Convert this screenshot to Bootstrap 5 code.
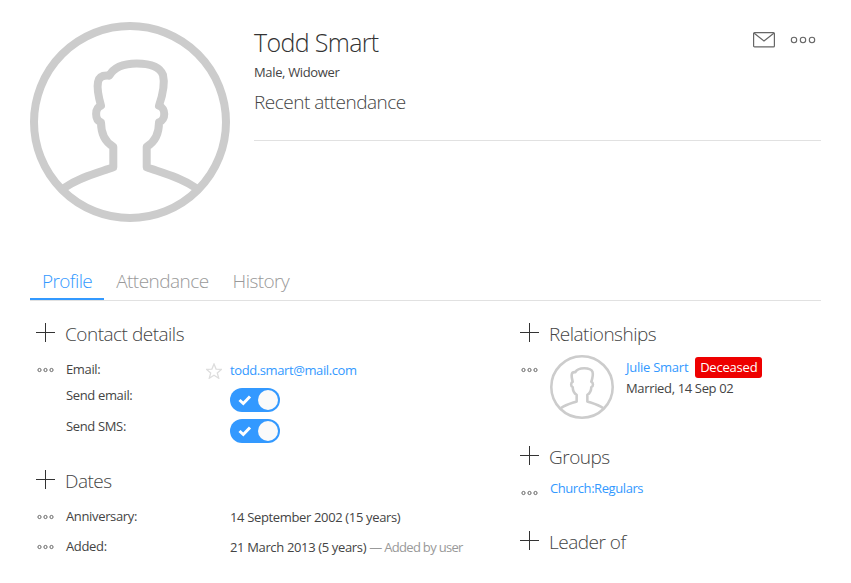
<!DOCTYPE html>
<html lang="en">
<head>
<meta charset="utf-8">
<meta name="viewport" content="width=device-width, initial-scale=1">
<title>Todd Smart</title>
<link href="https://cdn.jsdelivr.net/npm/bootstrap@5.3.0/dist/css/bootstrap.min.css" rel="stylesheet">
<style>
body{font-family:"Segoe UI","Open Sans","Noto Sans",sans-serif;font-size:13px;line-height:14px;color:#444;background:#fff;overflow:hidden;letter-spacing:-.35px}
a{color:#39f;text-decoration:none}
.page{padding:22px 30px 0}
.avatar-lg{width:200px;height:200px}
.avatar-sm{width:64px;height:64px}
.avatar{display:block;fill:none;stroke:#ccc;stroke-width:8;stroke-linejoin:round}
.intro{padding:3px 0 23px;border-bottom:1px solid #e1e1e1;margin-left:24px}
.person-name{font-size:25px;line-height:34px;font-weight:300;margin:0 0 3px;color:#333;letter-spacing:-.65px}
.facts{line-height:20px;margin-bottom:5px}
.title{font-size:19px;line-height:30px;font-weight:300;margin:0;color:#444;letter-spacing:-.5px}
.tools{gap:15px;padding-top:7px;margin-right:5px}
.stroke-icon{fill:none;stroke:#666;display:block}
.tabs{margin-top:44px;border-bottom:1px solid #e1e1e1}
.tabs .nav-link{font-size:19px;line-height:30px;font-weight:300;letter-spacing:-.55px;padding:0 12px 2px;border-bottom:2px solid transparent;color:#999}
.tabs .nav-link.active{color:#39f;border-color:#39f;letter-spacing:-.6px}
.main-col{width:484px;padding-left:6px}
.side-col{padding-left:6px}
.sections{padding-top:18px}
.head{gap:10px;height:28px}
.head svg{margin-top:4px}
.head .stroke-icon{stroke:#333}
.head + .entry{margin-top:14px}
.entry{min-height:30px}
.entry.entry-mail{min-height:27px}
.more{width:30px;padding:6px 0 0 1px}
.term{width:140px;padding-top:1px}
.fav{width:24px;padding-top:2px}
.val{padding-top:2px;white-space:nowrap}
.mail{letter-spacing:-.4px}
.note{color:#999;letter-spacing:-.68px}
.switch-row{min-height:31px;padding-left:30px}
.switch-row .term{width:164px;padding-top:0}
.switch{width:50px;height:24px;border-radius:12px;background:#39f;padding:2px 2px 2px 8px}
.knob{width:20px;height:20px;border-radius:50%;background:#fafafa}
.deceased{background:#e00;color:#fff;border-radius:3px;line-height:21px;height:21px;width:67px;text-align:center;margin-left:7px;letter-spacing:-.2px}
.kin{padding:2px 0 0 12px}
.kin-line{line-height:21px;height:21px}
.kin-line a{letter-spacing:-.25px}
.relation .more{padding-top:12px}
.relations{height:123px}
.groups{height:85px}
.group-row{padding-top:11px}
.group-row .more{padding-top:9px}
.group-row a{letter-spacing:-.42px}
</style>
</head>
<body>
<svg width="0" height="0" class="position-absolute" aria-hidden="true">
<defs>
<symbol id="person" viewBox="0 0 200 200"><circle cx="100" cy="100" r="96"/><path d="M34 166C50 155 67 151 83.300 145.300V124.700C75 120 71 112 71 100.300C64.500 98 64.500 86 71 83.700C68 73 67 65 68 60C69 55 73 53 79.300 53.700C84 45 94 41.500 106.700 41.500C120 41.500 130 45 133 53C135 61 133 72 129 83.700C136 86 136 98 129 100.300C129 112 125 120 116.700 124.700V145.300C133 151 150 155 166 166"/></symbol>
<symbol id="dots" viewBox="0 0 17 6"><circle cx="2.500" cy="3" r="1.600"/><circle cx="8.500" cy="3" r="1.600"/><circle cx="14.500" cy="3" r="1.600"/></symbol>
<symbol id="plus" viewBox="0 0 19 19"><path d="M9.500 0V19M0 9.500H19"/></symbol>
<symbol id="tick" viewBox="0 0 14 12"><path d="M1.500 6L5.300 9.500L12 2.500"/></symbol>
</defs>
</svg>
<div class="page">
<header class="d-flex align-items-start">
<svg class="avatar avatar-lg flex-shrink-0"><use href="#person"/></svg>
<div class="intro d-flex flex-grow-1 justify-content-between">
<div>
<h1 class="person-name">Todd Smart</h1>
<div class="facts">Male, Widower</div>
<h2 class="title">Recent attendance</h2>
</div>
<div class="tools d-flex align-items-start">
<svg class="stroke-icon" width="22" height="16" stroke-width="1.200"><rect x=".6" y=".6" width="20.800" height="14.300" rx="1"/><path d="M1.200 1.200L11 9L20.800 1.200"/></svg>
<svg class="stroke-icon" width="26" height="16" stroke-width="1.100"><circle cx="4" cy="8" r="2.700"/><circle cx="13" cy="8" r="2.700"/><circle cx="22" cy="8" r="2.700"/></svg>
</div>
</div>
</header>
<nav class="nav tabs">
<a class="nav-link active" href="#">Profile</a>
<a class="nav-link" href="#">Attendance</a>
<a class="nav-link" href="#">History</a>
</nav>
<main class="sections d-flex">
<div class="main-col flex-shrink-0">
<section>
<div class="head d-flex"><svg class="stroke-icon" width="19" height="19"><use href="#plus"/></svg><h2 class="title">Contact details</h2></div>
<div class="entry entry-mail d-flex"><div class="more"><svg class="stroke-icon" width="17" height="6"><use href="#dots"/></svg></div><div class="term">Email:</div><div class="fav"><svg class="d-block" width="16" height="16" fill="none" stroke="#ddd" stroke-width="1.300"><path d="M8 1L10.100 6.100L15.400 6.400L11.300 9.900L12.700 15.200L8 12.300L3.300 15.200L4.700 9.900L.6 6.400L5.900 6.100Z"/></svg></div><div class="val"><a class="mail" href="#">todd.smart@mail.com</a></div></div>
<div class="switch-row d-flex"><div class="term">Send email:</div><div class="switch d-flex align-items-center justify-content-between"><svg width="14" height="12" fill="none" stroke="#fff" stroke-width="3"><use href="#tick"/></svg><div class="knob"></div></div></div>
<div class="switch-row d-flex"><div class="term">Send SMS:</div><div class="switch d-flex align-items-center justify-content-between"><svg width="14" height="12" fill="none" stroke="#fff" stroke-width="3"><use href="#tick"/></svg><div class="knob"></div></div></div>
</section>
<section class="pt-3">
<div class="head d-flex"><svg class="stroke-icon" width="19" height="19"><use href="#plus"/></svg><h2 class="title">Dates</h2></div>
<div class="entry d-flex"><div class="more"><svg class="stroke-icon" width="17" height="6"><use href="#dots"/></svg></div><div class="term">Anniversary:</div><div class="fav"></div><div class="val">14 September 2002 (15 years)</div></div>
<div class="entry d-flex"><div class="more"><svg class="stroke-icon" width="17" height="6"><use href="#dots"/></svg></div><div class="term">Added:</div><div class="fav"></div><div class="val">21 March 2013 (5 years) <span class="note">— Added by user</span></div></div>
</section>
</div>
<div class="side-col flex-grow-1">
<section class="relations">
<div class="head d-flex"><svg class="stroke-icon" width="19" height="19"><use href="#plus"/></svg><h2 class="title">Relationships</h2></div>
<div class="relation d-flex pt-2"><div class="more"><svg class="stroke-icon" width="17" height="6"><use href="#dots"/></svg></div><svg class="avatar avatar-sm"><use href="#person"/></svg>
<div class="kin"><div class="kin-line d-flex"><a href="#">Julie Smart</a><span class="deceased">Deceased</span></div><div class="kin-line">Married, 14 Sep 02</div></div></div>
</section>
<section class="groups">
<div class="head d-flex"><svg class="stroke-icon" width="19" height="19"><use href="#plus"/></svg><h2 class="title">Groups</h2></div>
<div class="group-row d-flex"><div class="more"><svg class="stroke-icon" width="17" height="6"><use href="#dots"/></svg></div><a href="#">Church:Regulars</a></div>
</section>
<section>
<div class="head d-flex"><svg class="stroke-icon" width="19" height="19"><use href="#plus"/></svg><h2 class="title">Leader of</h2></div>
</section>
</div>
</main>
</div>
<script src="https://cdn.jsdelivr.net/npm/bootstrap@5.3.0/dist/js/bootstrap.bundle.min.js"></script>
</body>
</html>
